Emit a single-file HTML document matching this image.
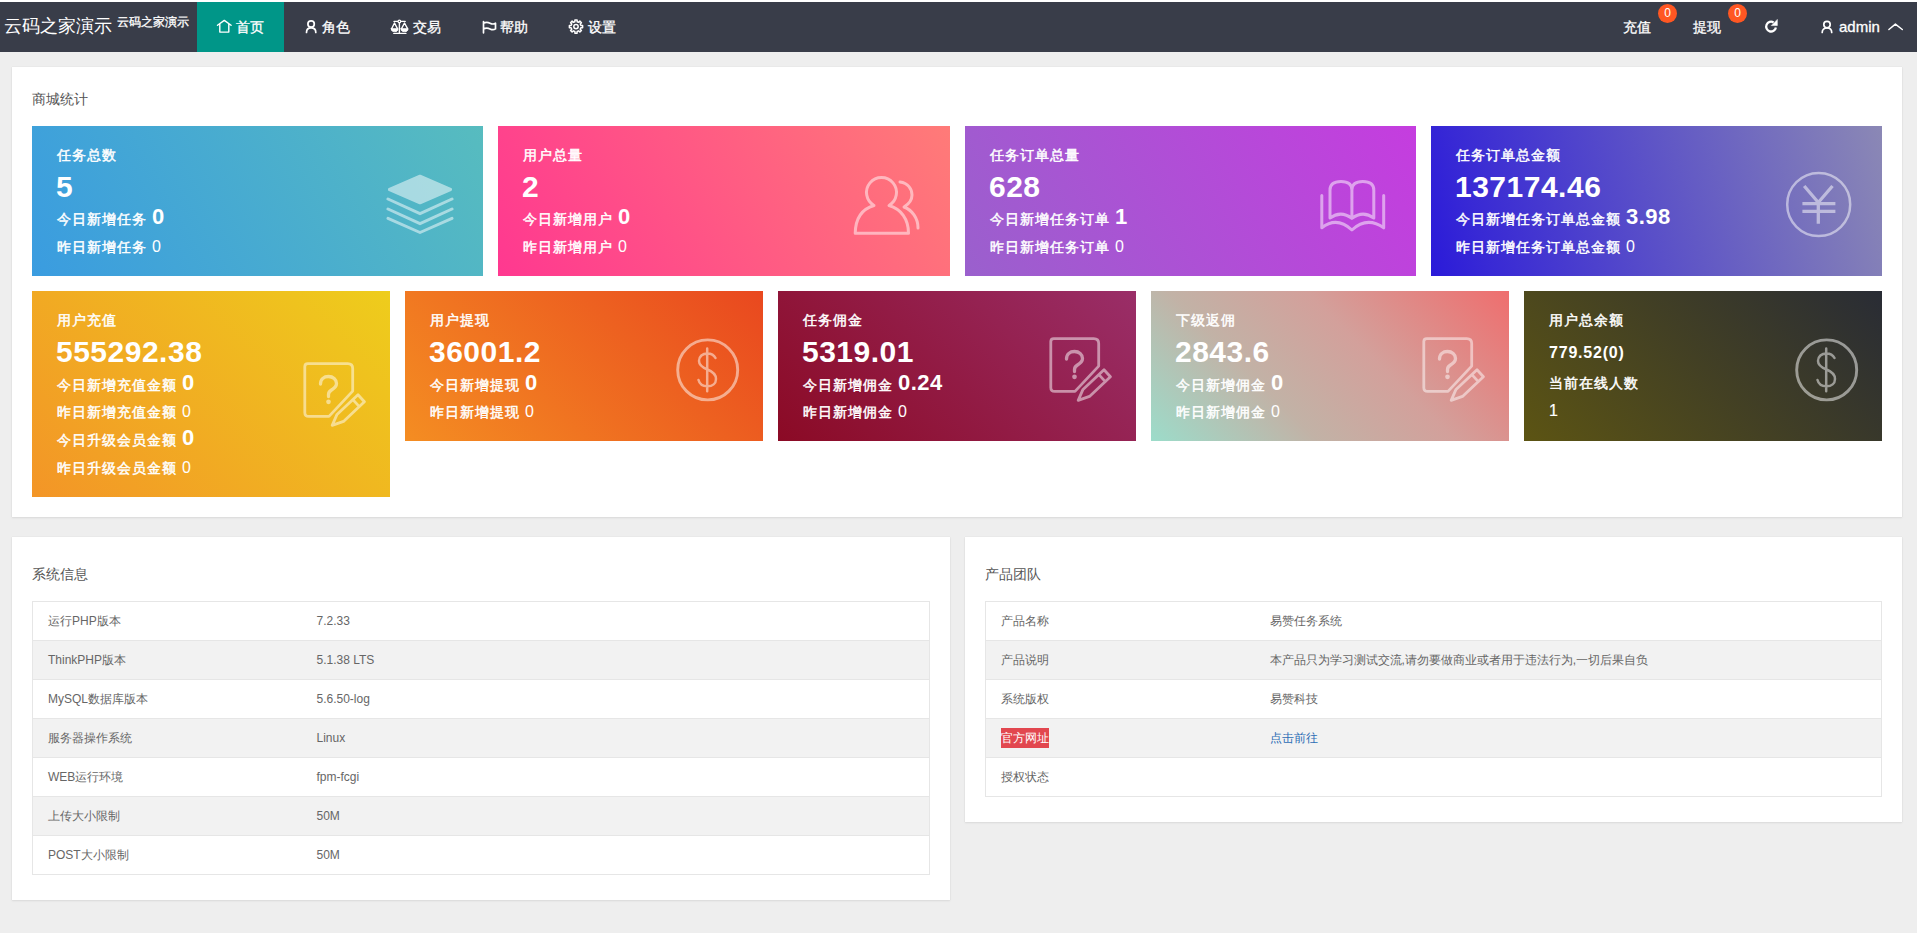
<!DOCTYPE html>
<html><head><meta charset="utf-8">
<style>
*{margin:0;padding:0;box-sizing:border-box}
html,body{width:1917px;height:933px;overflow:hidden}
body{background:#eeeeee;font-family:"Liberation Sans",sans-serif;color:#666;position:relative}
.abs{position:absolute}
#top{position:absolute;left:0;top:0;width:1917px;height:2px;background:#fff}
#hdr{position:absolute;left:0;top:2px;width:1917px;height:50px;background:#393d49;color:#fff}
#hdr .t{position:absolute;white-space:nowrap;line-height:20px;-webkit-text-stroke:.3px #fff}
#hdr svg{position:absolute}
.panel{position:absolute;background:#fff;box-shadow:0 1px 2px rgba(0,0,0,.08),0 0 1px rgba(0,0,0,.1)}
.ptitle{position:absolute;left:20px;font-size:14px;color:#555;line-height:20px;white-space:nowrap}
.card{position:absolute;color:#fff;overflow:hidden}
.card .l{position:absolute;left:25px;white-space:nowrap;font-size:14px;line-height:20px;font-weight:normal;-webkit-text-stroke:.45px #fff;letter-spacing:1px}
.card .n{position:absolute;left:24px;white-space:nowrap;font-size:30px;line-height:32px;font-weight:bold;letter-spacing:.5px}
.card .l b{font-size:22px;font-weight:bold;margin-left:5px;letter-spacing:.5px;-webkit-text-stroke:0}
.card .l i{font-style:normal;margin-left:5px;font-weight:normal;font-size:16px;-webkit-text-stroke:0;letter-spacing:0}
.card svg{position:absolute}
table{position:absolute;border-collapse:collapse;font-size:12px;color:#666;table-layout:fixed}
td{height:39px;border:1px solid #e6e6e6;border-left:none;border-right:none;padding:0 15px;white-space:nowrap}
tr:nth-child(even) td{background:#f2f2f2}
</style></head><body>
<div id="top"></div>
<div id="hdr">
  <div class="t" style="left:4px;top:14px;font-size:18px;-webkit-text-stroke:0">云码之家演示</div>
  <div class="t" style="left:117px;top:10px;font-size:12px">云码之家演示</div>
  <div class="abs" style="left:197px;top:0;width:87px;height:50px;background:#009688"></div>
  <!-- nav -->
  <div class="t" style="left:236px;top:15px;font-size:14px">首页</div>
  <div class="t" style="left:322px;top:15px;font-size:14px">角色</div>
  <div class="t" style="left:413px;top:15px;font-size:14px">交易</div>
  <div class="t" style="left:500px;top:15px;font-size:14px">帮助</div>
  <div class="t" style="left:588px;top:15px;font-size:14px">设置</div>
  
  <svg style="position:absolute;left:0;top:-2px" width="1917" height="52" viewBox="0 0 1917 52"><g fill="none" stroke="#fff" stroke-width="1.7" stroke-linecap="round" stroke-linejoin="round">
    <path d="M217.5,25.3 L224.3,20.4 L231.1,25.3 M219.8,23.7 V32.1 H228.8 V23.7" stroke-width="1.4"/>
    <circle cx="311.1" cy="24" r="3.2"/><path d="M306.5,32.5 C306.5,29.6 308.5,27.9 311.1,27.9 C313.7,27.9 315.8,29.6 315.8,32.5"/>
    <path d="M394,21.4 H405.2 M399.4,21.4 V33.4 M393.8,33.4 H405.9 M391.6,28.8 L394.5,23 L397.6,28.8 M401.4,28.8 L404.5,23 L407.7,28.8" stroke-width="1.4"/>
    <circle cx="399.4" cy="21.4" r="1.3" fill="#393d49" stroke-width="1.2"/>
    <path d="M391.3,28.8 H397.9 C397.9,31.2 396.5,31.6 394.6,31.6 C392.7,31.6 391.3,31.2 391.3,28.8 Z M401.1,28.8 H407.9 C407.9,31.2 406.5,31.6 404.5,31.6 C402.6,31.6 401.1,31.2 401.1,28.8 Z" fill="#fff" stroke-width="1"/>
    <path d="M483.5,21.6 V32.8 M483.5,23.3 C486,21.8 488,22.2 490,23.2 C492,24.2 494,24.2 495.5,23.2 V28.9 C494,29.9 492,29.9 490,28.9 C488,27.9 486,27.6 483.5,29"/>
    <path d="M574.90,19.99 L577.10,19.99 L577.13,21.73 L578.65,22.36 L579.90,21.15 L581.45,22.70 L580.24,23.95 L580.87,25.47 L582.61,25.50 L582.61,27.70 L580.87,27.73 L580.24,29.25 L581.45,30.50 L579.90,32.05 L578.65,30.84 L577.13,31.47 L577.10,33.21 L574.90,33.21 L574.87,31.47 L573.35,30.84 L572.10,32.05 L570.55,30.50 L571.76,29.25 L571.13,27.73 L569.39,27.70 L569.39,25.50 L571.13,25.47 L571.76,23.95 L570.55,22.70 L572.10,21.15 L573.35,22.36 L574.87,21.73 Z" stroke-width="1.5"/><circle cx="576" cy="26.6" r="2.2" stroke-width="1.5"/>
    <path d="M1775.9,27.5 A4.9,4.9 0 1 1 1773.6,22.4" stroke-width="2.3" stroke-linecap="butt"/><path d="M1777.3,19.8 V25.6 H1771.6 Z" fill="#fff" stroke-width="0.6"/>
    <circle cx="1827" cy="24.6" r="3.2"/><path d="M1822.2,32.4 C1822.2,29.6 1824.2,28 1827,28 C1829.8,28 1831.7,29.6 1831.7,32.4"/>
    <path d="M1888.9,29.5 L1895.4,24.1 L1902.3,29.5" stroke-width="1.5"/>
  </g></svg>
  <!-- right -->
  <div class="t" style="left:1623px;top:15px;font-size:14px">充值</div>
  <div class="abs" style="left:1658px;top:2px;width:19px;height:19px;border-radius:50%;background:#ff5722;font-size:12px;line-height:19px;text-align:center">0</div>
  <div class="t" style="left:1693px;top:15px;font-size:14px">提现</div>
  <div class="abs" style="left:1728px;top:2px;width:19px;height:19px;border-radius:50%;background:#ff5722;font-size:12px;line-height:19px;text-align:center">0</div>
  <div class="t" style="left:1839px;top:15px;font-size:15px">admin</div>
</div>

<!-- panel 1 -->
<div class="panel" style="left:12px;top:67px;width:1890px;height:450px">
  <div class="ptitle" style="top:22px">商城统计</div>
</div>

<!-- row 1 cards -->
<div class="card" style="left:32px;top:126px;width:451px;height:150px;background:linear-gradient(60deg,#3a9ce0,#57bcbf)">
  <svg style="left:0;top:0" width="451" height="150" viewBox="0 0 451 150"><g fill="none" stroke="#fff" opacity=".5" stroke-width="3" stroke-linecap="round" stroke-linejoin="round"><path d="M388,50.3 L357.5,63.5 L388,76.7 L418.5,63.5 Z" fill="#fff" stroke-width="3.2"/><path d="M356,73 L388,87.7 L420,73 M356,83 L388,97.7 L420,83 M356,92.4 L388,106.5 L420,92.4"/></g></svg>
  <div class="l" style="top:19px">任务总数</div>
  <div class="n" style="top:45px">5</div>
  <div class="l" style="top:81px">今日新增任务<b>0</b></div>
  <div class="l" style="top:111px">昨日新增任务<i>0</i></div>
</div>
<div class="card" style="left:498px;top:126px;width:452px;height:150px;background:linear-gradient(60deg,#ff3890,#ff7b78)">
  <svg style="left:0;top:0" width="452" height="150" viewBox="0 0 452 150"><g fill="none" stroke="#fff" opacity=".5" stroke-width="3" stroke-linecap="round" stroke-linejoin="round"><path d="M376,79.5 A15,15 0 1 1 391,79.5 C403,83 410.5,93 410.5,107.3 L357.2,107.3 C357.5,93 364,83 376,79.5 Z"/><path d="M402,56 C410,57 414,63 414,69 C414,74 411,78 406,81 C414,84 420,92 420,102"/></g></svg>
  <div class="l" style="top:19px">用户总量</div>
  <div class="n" style="top:45px">2</div>
  <div class="l" style="top:81px">今日新增用户<b>0</b></div>
  <div class="l" style="top:111px">昨日新增用户<i>0</i></div>
</div>
<div class="card" style="left:965px;top:126px;width:451px;height:150px;background:linear-gradient(60deg,#9a60cd,#c53ddf)">
  <svg style="left:0;top:0" width="451" height="150" viewBox="0 0 451 150"><g fill="none" stroke="#fff" opacity=".5" stroke-width="3" stroke-linecap="round" stroke-linejoin="round"><path d="M356.8,69.4 V101.8 Q371.8,90 386.9,104 Q402,90 418.7,101.8 V69.4"/><path d="M365,92 V64 C365,58 369,55.5 376,55.5 C383,55.5 386.9,58 386.9,64 V92 M365,92 Q376,84 386.9,92.4 Q397.8,84 408.8,92 V64 C408.8,58 404.8,55.5 397.8,55.5 C390.8,55.5 386.9,58 386.9,64"/></g></svg>
  <div class="l" style="top:19px">任务订单总量</div>
  <div class="n" style="top:45px">628</div>
  <div class="l" style="top:81px">今日新增任务订单<b>1</b></div>
  <div class="l" style="top:111px">昨日新增任务订单<i>0</i></div>
</div>
<div class="card" style="left:1431px;top:126px;width:451px;height:150px;background:linear-gradient(75deg,#2a1ad9,#3829d5 12%,#8b88b5)">
  <svg style="left:0;top:0" width="451" height="150" viewBox="0 0 451 150"><g fill="none" stroke="#fff" opacity=".5" stroke-width="3" stroke-linecap="round" stroke-linejoin="round"><circle cx="387.7" cy="78.5" r="31.5" stroke-width="2.5"/><path d="M373.2,60 L387.3,76.5 L401.5,60 M371.4,77.7 H404.4 M371.4,85.3 H404.4 M387.3,76.5 V97.7" stroke-width="3.3" stroke-linecap="butt"/></g></svg>
  <div class="l" style="top:19px">任务订单总金额</div>
  <div class="n" style="top:45px">137174.46</div>
  <div class="l" style="top:81px">今日新增任务订单总金额<b>3.98</b></div>
  <div class="l" style="top:111px">昨日新增任务订单总金额<i>0</i></div>
</div>

<!-- row 2 cards -->
<div class="card" style="left:32px;top:291px;width:358px;height:206px;background:linear-gradient(45deg,#f39527,#eecd1c)">
  <svg style="left:0;top:0" width="358" height="206" viewBox="0 0 358 206"><g fill="none" stroke="#fff" opacity=".5" stroke-width="3" stroke-linecap="round" stroke-linejoin="round"><g transform="translate(0,25)"><path d="M320.7,75.1 V52.6 Q320.7,47.6 315.7,47.6 H275.8 Q272.8,47.6 272.8,50.6 V96.4 Q272.8,100.4 276.8,100.4 H297 L320.7,75.1" stroke-width="2.8"/><path d="M288.5,68 C288.5,63 292,60.5 296.5,60.5 C301,60.5 304.5,63.5 304.5,67.5 C304.5,71 302,72.5 299.5,74 C297.5,75.2 296.5,76.5 296.5,78.5 V80.5" stroke-width="3.3"/><circle cx="296.5" cy="85.8" r="1.6" fill="#fff" stroke-width="1.5"/><path d="M300.2,109.4 L305,98.4 L326,78.8 L332.4,85.8 L311.5,105.4 Z M320.9,83.6 L327.3,90.6" stroke-width="2.8"/></g></g></svg>
  <div class="l" style="top:19px">用户充值</div>
  <div class="n" style="top:45px">555292.38</div>
  <div class="l" style="top:82px">今日新增充值金额<b>0</b></div>
  <div class="l" style="top:111px">昨日新增充值金额<i>0</i></div>
  <div class="l" style="top:137px">今日升级会员金额<b>0</b></div>
  <div class="l" style="top:167px">昨日升级会员金额<i>0</i></div>
</div>
<div class="card" style="left:405px;top:291px;width:358px;height:150px;background:linear-gradient(45deg,#f48d22,#e9481f)">
  <svg style="left:0;top:0" width="358" height="150" viewBox="0 0 358 150"><g fill="none" stroke="#fff" opacity=".5" stroke-width="3" stroke-linecap="round" stroke-linejoin="round"><g transform="translate(0,0)"><circle cx="302.7" cy="78.9" r="30" stroke-width="2.9"/><path d="M310.5,67 C309,64 306,62.4 302.5,62.4 C297.5,62.4 294,65.5 294,70 C294,74.5 297.5,76.5 302.5,78.5 C307.5,80.5 311,83 311,88 C311,92.5 307.5,95.3 302.5,95.3 C298,95.3 294.5,93 293.5,89 M302.2,57.4 V100.3" stroke-width="2.5"/></g></g></svg>
  <div class="l" style="top:19px">用户提现</div>
  <div class="n" style="top:45px">36001.2</div>
  <div class="l" style="top:82px">今日新增提现<b>0</b></div>
  <div class="l" style="top:111px">昨日新增提现<i>0</i></div>
</div>
<div class="card" style="left:778px;top:291px;width:358px;height:150px;background:linear-gradient(45deg,#8b0a25,#9a2e68)">
  <svg style="left:0;top:0" width="358" height="150" viewBox="0 0 358 150"><g fill="none" stroke="#fff" opacity=".5" stroke-width="3" stroke-linecap="round" stroke-linejoin="round"><g transform="translate(0,0)"><path d="M320.7,75.1 V52.6 Q320.7,47.6 315.7,47.6 H275.8 Q272.8,47.6 272.8,50.6 V96.4 Q272.8,100.4 276.8,100.4 H297 L320.7,75.1" stroke-width="2.8"/><path d="M288.5,68 C288.5,63 292,60.5 296.5,60.5 C301,60.5 304.5,63.5 304.5,67.5 C304.5,71 302,72.5 299.5,74 C297.5,75.2 296.5,76.5 296.5,78.5 V80.5" stroke-width="3.3"/><circle cx="296.5" cy="85.8" r="1.6" fill="#fff" stroke-width="1.5"/><path d="M300.2,109.4 L305,98.4 L326,78.8 L332.4,85.8 L311.5,105.4 Z M320.9,83.6 L327.3,90.6" stroke-width="2.8"/></g></g></svg>
  <div class="l" style="top:19px">任务佣金</div>
  <div class="n" style="top:45px">5319.01</div>
  <div class="l" style="top:82px">今日新增佣金<b>0.24</b></div>
  <div class="l" style="top:111px">昨日新增佣金<i>0</i></div>
</div>
<div class="card" style="left:1151px;top:291px;width:358px;height:150px;background:linear-gradient(45deg,#9cdcca,#c2b2a6 33%,#d3a09b 60%,#ef6e6e)">
  <svg style="left:0;top:0" width="358" height="150" viewBox="0 0 358 150"><g fill="none" stroke="#fff" opacity=".5" stroke-width="3" stroke-linecap="round" stroke-linejoin="round"><g transform="translate(0,0)"><path d="M320.7,75.1 V52.6 Q320.7,47.6 315.7,47.6 H275.8 Q272.8,47.6 272.8,50.6 V96.4 Q272.8,100.4 276.8,100.4 H297 L320.7,75.1" stroke-width="2.8"/><path d="M288.5,68 C288.5,63 292,60.5 296.5,60.5 C301,60.5 304.5,63.5 304.5,67.5 C304.5,71 302,72.5 299.5,74 C297.5,75.2 296.5,76.5 296.5,78.5 V80.5" stroke-width="3.3"/><circle cx="296.5" cy="85.8" r="1.6" fill="#fff" stroke-width="1.5"/><path d="M300.2,109.4 L305,98.4 L326,78.8 L332.4,85.8 L311.5,105.4 Z M320.9,83.6 L327.3,90.6" stroke-width="2.8"/></g></g></svg>
  <div class="l" style="top:19px">下级返佣</div>
  <div class="n" style="top:45px">2843.6</div>
  <div class="l" style="top:82px">今日新增佣金<b>0</b></div>
  <div class="l" style="top:111px">昨日新增佣金<i>0</i></div>
</div>
<div class="card" style="left:1524px;top:291px;width:358px;height:150px;background:linear-gradient(45deg,#5c5413,#292c35)">
  <svg style="left:0;top:0" width="358" height="150" viewBox="0 0 358 150"><g fill="none" stroke="#fff" opacity=".5" stroke-width="3" stroke-linecap="round" stroke-linejoin="round"><g transform="translate(0,0)"><circle cx="302.7" cy="78.9" r="30" stroke-width="2.9"/><path d="M310.5,67 C309,64 306,62.4 302.5,62.4 C297.5,62.4 294,65.5 294,70 C294,74.5 297.5,76.5 302.5,78.5 C307.5,80.5 311,83 311,88 C311,92.5 307.5,95.3 302.5,95.3 C298,95.3 294.5,93 293.5,89 M302.2,57.4 V100.3" stroke-width="2.5"/></g></g></svg>
  <div class="l" style="top:19px">用户总余额</div>
  <div class="l" style="top:52px;font-size:16px;font-weight:bold;letter-spacing:.8px;-webkit-text-stroke:0">779.52(0)</div>
  <div class="l" style="top:82px">当前在线人数</div>
  <div class="l" style="top:110px;font-size:16px;-webkit-text-stroke:.2px #fff">1</div>
</div>

<!-- panel 2 -->
<div class="panel" style="left:12px;top:537px;width:938px;height:363px">
  <div class="ptitle" style="top:27px">系统信息</div>
  <table style="left:20px;top:64px;width:898px;border-left:1px solid #e6e6e6;border-right:1px solid #e6e6e6">
    <colgroup><col style="width:269px"><col></colgroup>
    <tr><td>运行PHP版本</td><td>7.2.33</td></tr>
    <tr><td>ThinkPHP版本</td><td>5.1.38 LTS</td></tr>
    <tr><td>MySQL数据库版本</td><td>5.6.50-log</td></tr>
    <tr><td>服务器操作系统</td><td>Linux</td></tr>
    <tr><td>WEB运行环境</td><td>fpm-fcgi</td></tr>
    <tr><td>上传大小限制</td><td>50M</td></tr>
    <tr><td>POST大小限制</td><td>50M</td></tr>
  </table>
</div>

<!-- panel 3 -->
<div class="panel" style="left:965px;top:537px;width:937px;height:285px">
  <div class="ptitle" style="top:27px">产品团队</div>
  <table style="left:20px;top:64px;width:897px;border-left:1px solid #e6e6e6;border-right:1px solid #e6e6e6">
    <colgroup><col style="width:269px"><col></colgroup>
    <tr><td>产品名称</td><td>易赞任务系统</td></tr>
    <tr><td>产品说明</td><td>本产品只为学习测试交流,请勿要做商业或者用于违法行为,一切后果自负</td></tr>
    <tr><td>系统版权</td><td>易赞科技</td></tr>
    <tr><td><span style="background:#e2474f;color:#fff;display:inline-block;line-height:20px">官方网址</span></td><td><span style="color:#2d6db5">点击前往</span></td></tr>
    <tr><td>授权状态</td><td></td></tr>
  </table>
</div>
</body></html>
